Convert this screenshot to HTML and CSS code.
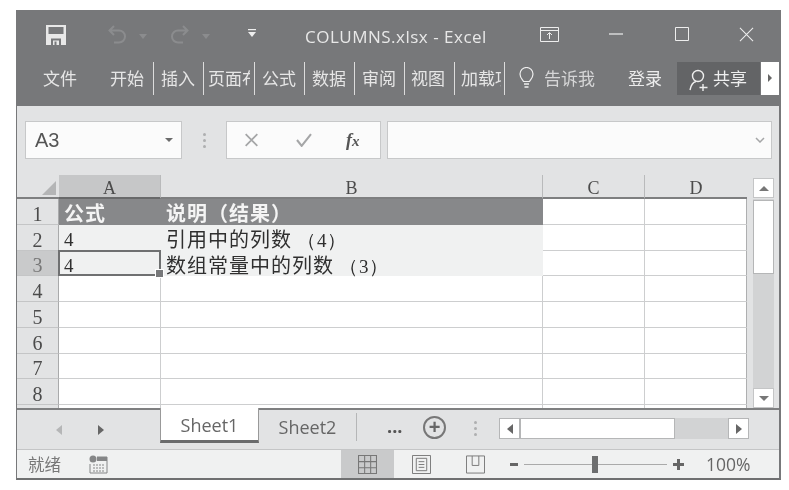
FILE: index.html
```html
<!DOCTYPE html>
<html lang="zh">
<head>
<meta charset="utf-8">
<title>COLUMNS.xlsx - Excel</title>
<link rel="stylesheet" href="styles.css">
</head>
<body>
<div class="window">
  <header class="ribbon">
    <div class="titlebar">
      <svg class="ic save" viewBox="0 0 20 20"><path d="M0 0h20v20H0z" fill="#e8e8e8"/><path d="M2.500 2h15v7h-15z" fill="#77787a"/><path d="M5 13.500h10V20H5z" fill="#77787a"/><path d="M7 15.500h6V20H7z" fill="#e8e8e8"/><path d="M8.500 16.500h2V20h-2z" fill="#77787a"/></svg>
      <svg class="ic undo" viewBox="0 0 20 20"><path d="M6 1 1.500 5.500 6 10M2 5.500h9a6 6 0 0 1 0 12H6" fill="none" stroke="#8b8c8e" stroke-width="2"/></svg>
      <span class="caret dim c1"></span>
      <svg class="ic redo" viewBox="0 0 20 20"><path d="M14 1l4.500 4.500L14 10M18 5.500H9a6 6 0 0 0 0 12h5" fill="none" stroke="#8b8c8e" stroke-width="2"/></svg>
      <span class="caret dim c2"></span>
      <svg class="ic custom" viewBox="0 0 10 10"><path d="M1 1h8v1.200H1z" fill="#eee"/><path d="M1 4h8L5 9z" fill="#eee"/></svg>
      <span class="doc">COLUMNS.xlsx - Excel</span>
      <svg class="ic display" viewBox="0 0 19 15"><path d="M.5.500h18v14H.5zM.5 3.500h18" fill="none" stroke="#eee"/><path d="M9.500 12V6M7 8l2.500-2.500L12 8" fill="none" stroke="#eee"/></svg>
      <svg class="ic min" viewBox="0 0 14 2"><path d="M0 1h14" stroke="#eee" stroke-width="1.200"/></svg>
      <svg class="ic max" viewBox="0 0 14 14"><path d="M.5.500h13v13H.5z" fill="none" stroke="#eee"/></svg>
      <svg class="ic close" viewBox="0 0 16 16"><path d="M1 1l14 14M15 1 1 15" stroke="#eee" stroke-width="1.100"/></svg>
    </div>
    <nav class="tabs">
      <span class="tab t-file">文件</span>
      <span class="tab t-home">开始</span>
      <span class="tab sep">插入</span>
      <span class="tab sep clip w1"><span>页面布局</span></span>
      <span class="tab sep">公式</span>
      <span class="tab sep">数据</span>
      <span class="tab sep">审阅</span>
      <span class="tab sep p6">视图</span>
      <span class="tab sep clip w2 endsep"><span>加载项</span></span>
      <svg class="ic bulb" viewBox="0 0 15 22"><path d="M4.500 14.500C3 12 1 10.500 1 7a6.500 6.500 0 0 1 13 0c0 3.500-2 5-3.500 7.500z" fill="none" stroke="#eee" stroke-width="1.200"/><path d="M5 17h5M5.500 20h4" stroke="#eee" stroke-width="1.500"/></svg>
      <span class="tell">告诉我</span>
      <span class="login">登录</span>
      <span class="share">
        <svg class="ic person" viewBox="0 0 20 22"><circle cx="9" cy="7" r="5.500" fill="none" stroke="#eee" stroke-width="1.400"/><path d="M1 21c1-5 3.500-8 6-8.500M14 15v7M10.500 18.500h8" fill="none" stroke="#eee" stroke-width="1.400"/></svg>共享</span>
      <span class="more"><i></i></span>
    </nav>
  </header>

  <section class="formula">
    <div class="box namebox"><span>A3</span><i class="caret dark"></i></div>
    <div class="vdots"><i></i><i></i><i></i></div>
    <div class="box fnbox">
      <svg class="ic x" viewBox="0 0 12 12"><path d="M1 1l10 10M11 1 1 11" stroke="#a5a6a7" stroke-width="1.500"/></svg>
      <svg class="ic v" viewBox="0 0 14 12"><path d="M1 6l4 5 8-10" fill="none" stroke="#a5a6a7" stroke-width="1.800"/></svg>
      <span class="fx">f<sub>x</sub></span>
    </div>
    <div class="box input"><svg class="ic chev" viewBox="0 0 10 6"><path d="M1 1l4 4 4-4" fill="none" stroke="#a5a6a7" stroke-width="1.500"/></svg></div>
  </section>

  <section class="work">
    <div class="sheet">
      <div class="ch corner"><i></i></div><div class="ch on">A</div><div class="ch">B</div><div class="ch">C</div><div class="ch">D</div>

      <div class="rh">1</div><div class="c head">公式</div><div class="c head">说明（结果）</div><div class="c"></div><div class="c"></div>
      <div class="rh">2</div><div class="c tint num">4</div><div class="c tint">引用中的列数 <b class="pn">（4）</b></div><div class="c"></div><div class="c"></div>
      <div class="rh on">3</div><div class="c tint num sel">4</div><div class="c tint">数组常量中的列数 <b class="pn">（3）</b></div><div class="c"></div><div class="c"></div>
      <div class="rh">4</div><div class="c"></div><div class="c"></div><div class="c"></div><div class="c"></div>
      <div class="rh">5</div><div class="c"></div><div class="c"></div><div class="c"></div><div class="c"></div>
      <div class="rh">6</div><div class="c"></div><div class="c"></div><div class="c"></div><div class="c"></div>
      <div class="rh">7</div><div class="c"></div><div class="c"></div><div class="c"></div><div class="c"></div>
      <div class="rh">8</div><div class="c"></div><div class="c"></div><div class="c"></div><div class="c"></div>
      <div class="rh"></div><div class="c"></div><div class="c"></div><div class="c"></div><div class="c"></div>
    </div>
    <div class="vscroll">
      <span class="sbtn"><i class="tri up"></i></span>
      <span class="vthumb"></span>
      <span class="sbtn end"><i class="tri down"></i></span>
    </div>
  </section>

  <section class="sheetbar">
    <div class="nav"><i class="tri left pale"></i><i class="tri right"></i></div>
    <span class="stab active">Sheet1</span>
    <span class="stab">Sheet2</span>
    <span class="ellipsis">...</span>
    <span class="add">+</span>
    <div class="vdots d2"><i></i><i></i><i></i></div>
    <div class="hscroll">
      <span class="hbtn"><i class="tri left"></i></span>
      <span class="hthumb"></span>
      <span class="hbtn end"><i class="tri right"></i></span>
    </div>
  </section>

  <footer class="status">
    <span class="ready">就绪</span>
    <svg class="ic calc" viewBox="0 0 19 19"><circle cx="4" cy="4" r="3.500" fill="#858687"/><path d="M8 2h10v16H1V9" fill="none" stroke="#858687"/><path d="M8 2h10v4H8z" fill="#858687"/><path d="M4 10h12M4 13h12M4 16h12" stroke="#858687" stroke-dasharray="2 1"/></svg>
    <span class="view active"><svg class="ic vi" viewBox="0 0 18 18"><path d="M.5.500h17v17H.5zM6.300.500v17M12 .500v17M.5 6.300h17M.5 12h17" fill="none" stroke="#777"/></svg></span>
    <span class="view v2"><svg class="ic vi" viewBox="0 0 20 20"><path d="M.5.500h19v19H.5z" fill="none" stroke="#777"/><path d="M4.500 3.500h11v13h-11zM7 7h6M7 10h6M7 13h6" fill="none" stroke="#777"/></svg></span>
    <span class="view v3"><svg class="ic vi" viewBox="0 0 20 20"><path d="M.5 1v18h19V1M6.500 1v10h7V1M.5 1h19" fill="none" stroke="#777"/></svg></span>
    <span class="minus"></span>
    <span class="slider"><i></i></span>
    <span class="plus"></span>
    <span class="zoom">100%</span>
  </footer>
</div>
</body>
</html>
```
FILE: styles.css
```css
* { box-sizing: border-box; }
html, body { margin: 0; background: #fff; }
body { padding: 10px 8px 10px 16px; font-family: "Noto Sans CJK SC", "Noto Sans", sans-serif; }
i { display: block; font-style: normal; }
.ic { display: block; flex: none; }

.window {
  width: 765px; height: 470px; display: flex; flex-direction: column;
  background: #e2e3e4; border-left: 1px solid #77787a; border-right: 2px solid #77787a; border-bottom: 2px solid #6f7071;
  filter: blur(.35px); overflow: hidden;
}

/* title + ribbon tabs */
.ribbon { height: 96px; background: #77787a; color: #e6e6e6; flex: none; }
.titlebar { height: 48px; display: flex; align-items: center; position: relative; }
.save { width: 20px; height: 20px; margin: 2px 0 0 29px; }
.undo { width: 20px; height: 20px; margin: 2px 0 0 42px; }
.caret { width: 0; height: 0; border: 4px solid transparent; border-top: 5px solid #8b8c8e; border-bottom: 0; flex: none; }
.c1 { margin: 4px 0 0 11px; }
.redo { width: 20px; height: 20px; margin: 2px 0 0 22px; }
.c2 { margin: 4px 0 0 13px; }
.custom { width: 10px; height: 10px; margin: -2px 0 0 37px; }
.doc { font: 17px/20px "Open Sans", sans-serif; letter-spacing: .5px; margin: 6px 0 0 48px; width: 192px; white-space: nowrap; color: #e8e8e8; }
.display { width: 19px; height: 15px; margin-left: 43px; }
.min { width: 14px; height: 2px; margin-left: 50px; }
.max { width: 14px; height: 14px; margin-left: 52px; }
.close { width: 15px; height: 15px; margin-left: 50px; }

.tabs { height: 48px; display: flex; align-items: center; font-size: 17px; line-height: 24px; padding: 0 0 8px 26px; }
.tab { display: block; flex: none; height: 33px; line-height: 32px; white-space: nowrap; }
.t-file { width: 67px; }
.t-home { width: 43px; }
.sep { width: 50px; padding-left: 7px; border-left: 1px solid #dcdcdc; }
.p6 { padding-left: 6px; }
.clip { overflow: hidden; }
.clip span { display: block; overflow: hidden; }
.w1 { width: 51px; padding-left: 4px; }
.w1 span { width: 42px; }
.w2 { width: 51px; padding-left: 6px; }
.w2 span { width: 40px; }
.endsep { position: relative; }
.endsep::after { content: ""; position: absolute; right: 0; top: 0; width: 1px; height: 33px; background: #dcdcdc; }
.bulb { width: 15px; height: 22px; margin-left: 14px; }
.tell { font-size: 17px; margin-left: 10px; width: 84px; color: #d6d6d7; }
.login { width: 49px; color: #ececec; }
.share { width: 83px; height: 33px; background: #636466; display: flex; align-items: center; padding-left: 12px; font-size: 17px; gap: 4px; color: #eee; }
.person { width: 20px; height: 22px; margin-top: 3px; }
.more { width: 18px; height: 33px; margin-left: 1px; background: #fff; display: flex; align-items: center; justify-content: center; }
.more i { border: 4px solid transparent; border-left: 4px solid #666; border-right: 0; }

/* formula bar */
.formula { height: 69px; flex: none; display: flex; padding: 15px 0 0 8px; }
.box { height: 38px; background: #fbfbfb; border: 1px solid #c7c8c9; }
.namebox { width: 157px; display: flex; align-items: center; justify-content: space-between; padding: 0 8px 0 9px; font: 20px "Liberation Sans", sans-serif; color: #555; }
.caret.dark { border-top-color: #6b6b6b; border-width: 4.500px; border-bottom: 0; }
.vdots { width: 44px; height: 38px; display: flex; flex-direction: column; align-items: center; justify-content: center; gap: 3px; }
.vdots i { width: 3px; height: 3px; background: #aeafb0; border-radius: 50%; }
.fnbox { width: 155px; display: flex; align-items: center; padding-left: 17px; }
.x { width: 15px; height: 14px; }
.v { width: 18px; height: 14px; margin-left: 36px; }
.fx { font: italic bold 18px "Liberation Serif", serif; color: #555; margin-left: 33px; }
.fx sub { font-size: 15px; vertical-align: baseline; }
.input { width: 385px; margin-left: 6px; display: flex; align-items: center; justify-content: flex-end; padding-right: 6px; }
.chev { width: 10px; height: 6px; }

/* sheet */
.work { height: 233px; flex: none; display: flex; }
.sheet {
  width: 731px; height: 233px; display: grid; overflow: hidden; background: #fff;
  grid-template-columns: 42px 102px 382px 102px 103px;
  grid-template-rows: 24px repeat(9, 25.750px);
  font: 18px/1 "Liberation Serif", serif; color: #444;
}
.ch, .rh { display: flex; align-items: center; justify-content: center; background: #e2e3e4; color: #4b4b4b; }
.ch { border-bottom: 2px solid #7e7f80; border-right: 1px solid #b9babb; padding-top: 3px; }
.ch.on { background: #c6c7c8; border-bottom-color: #68696a; }
.corner { position: relative; border-right: 0; }
.corner i { position: absolute; right: 3px; bottom: 2px; border: 7px solid transparent; border-right: 7px solid #b4b5b6; border-bottom: 7px solid #b4b5b6; }
.rh { font-size: 20px; border-bottom: 1px solid #c4c5c6; border-right: 1px solid #a9aaab; padding-top: 5px; }
.rh.on { background: #c9cacb; color: #777; }
.c { border-right: 1px solid #cdcecf; border-bottom: 1px solid #cdcecf; font: 20px/27px "Noto Sans CJK SC", sans-serif; letter-spacing: 1px; padding-left: 5px; white-space: nowrap; color: #2f2f2f; }
.sheet > .c:nth-child(5n) { border-right: 2px solid #aeafb0; }
.head { background: #87888a; color: #f4f4f4; font-weight: 700; border-color: #87888a; }
.tint { background: #f0f1f1; border-color: #f0f1f1; }
.num { font: 19px/29px "Liberation Serif", serif; }
.pn { font: 19px/1 "Liberation Serif", serif; letter-spacing: .5px; font-weight: 400; }
.sel { position: relative; z-index: 1; border-color: #f0f1f1; }
.sel::before { content: ""; position: absolute; inset: -1px; border: 2px solid #6f7071; }
.sel::after { content: ""; position: absolute; right: -4px; bottom: -3px; width: 7px; height: 7px; background: #77787a; border: 1px solid #fff; }

.vscroll { width: 32px; display: flex; flex-direction: column; padding: 0 5px 0 6px; }
.vscroll { background: linear-gradient(#e2e3e4, #e2e3e4) 0 0 / 100% 24px no-repeat, linear-gradient(90deg, #e2e3e4 6px, #d2d3d4 6px, #d2d3d4 27px, #e2e3e4 27px); }
.sbtn { height: 20px; background: #fff; border: 1px solid #c4c5c6; display: flex; align-items: center; justify-content: center; flex: none; margin-top: 3px; width: 21px; }
.sbtn.end { margin-top: auto; }
.vthumb { height: 74px; width: 21px; background: #fff; border: 1px solid #b5b6b7; margin-top: 2px; }
.tri { width: 0; height: 0; border: 5px solid transparent; flex: none; }
.up { border-bottom: 5px solid #777; border-top: 0; }
.down { border-top: 5px solid #777; border-bottom: 0; }
.left { border-right: 6px solid #666; border-left: 0; }
.right { border-left: 6px solid #666; border-right: 0; }
.pale { border-right-color: #b5b6b7; }

/* sheet tabs */
.sheetbar { height: 41px; flex: none; display: flex; align-items: stretch; border-top: 2px solid #7e7f80; position: relative; font: 18px "Open Sans", sans-serif; color: #666; }
.nav { width: 143px; display: flex; align-items: center; gap: 36px; padding-left: 39px; }
.stab { width: 98px; display: flex; align-items: center; justify-content: center; height: 35px; }
.stab + .stab { border-right: 1px solid #b5b6b7; height: 28px; margin-top: 3px; }
.stab.active { background: #fff; height: 35px; margin-top: -2px; padding-top: 2px; border-bottom: 3px solid #6a6b6c; width: 99px; border-right: 1px solid #999; border-left: 1px solid #999; }
.ellipsis { margin-left: 30px; width: 23px; font-weight: 700; color: #555; line-height: 32px; }
.add { width: 23px; height: 23px; margin: 6px 0 0 13px; border: 2px solid #777; border-radius: 50%; font: 700 20px/18px "Liberation Sans", sans-serif; text-align: center; color: #666; }
.vdots.d2 { width: 28px; margin: 0 0 0 15px; height: 36px; justify-content: center; }
.hscroll { display: flex; width: 250px; height: 21px; margin: 8px 0 0 10px; background: #d2d3d4; }
.hbtn { width: 21px; height: 21px; background: #fff; border: 1px solid #b5b6b7; display: flex; align-items: center; justify-content: center; flex: none; }
.hbtn.end { margin-left: auto; }
.hthumb { width: 155px; background: #fff; border: 1px solid #b5b6b7; }

/* status */
.status { flex: 1; background: #f0f1f1; display: flex; align-items: center; color: #777; border-top: 1px solid #c4c5c6; }
.ready { font-size: 16.500px; margin-left: 11px; width: 61px; }
.calc { width: 19px; height: 19px; }
.view { display: flex; align-items: center; justify-content: center; height: 100%; flex: none; }
.view.active { width: 53px; background: #c9cacb; margin-left: 233px; }
.vi { width: 19px; height: 19px; }
.v2 { width: 20px; margin-left: 17px; }
.v3 { width: 20px; margin-left: 34px; }
.minus { width: 8px; height: 3px; background: #666; margin-left: 25px; }
.slider { width: 143px; height: 1px; background: #aaa; margin-left: 6px; position: relative; }
.slider i { position: absolute; left: 68px; top: -8px; width: 6px; height: 17px; background: #6d6e6f; }
.plus { width: 11px; height: 11px; margin-left: 6px; background: linear-gradient(#666, #666) center / 100% 3px no-repeat, linear-gradient(#666, #666) center / 3px 100% no-repeat; }
.zoom { font: 17.500px/20px "Open Sans", sans-serif; margin-left: 22px; color: #666; }
```
